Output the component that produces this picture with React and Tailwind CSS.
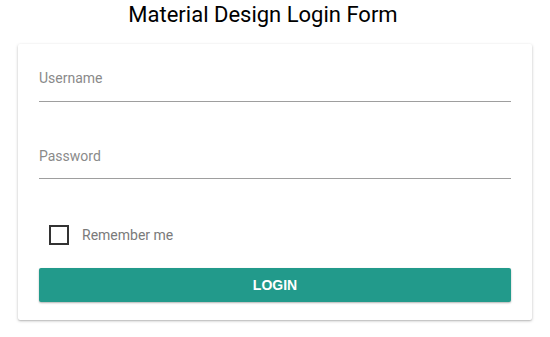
import React, { useState } from 'react';

const App = () => {
  const [remember, setRemember] = useState(false);

  return (
    <div className="min-h-screen bg-white font-['Roboto',sans-serif]">
      <h1 className="pt-[1px] pr-[24px] text-center text-[22px] leading-[28px] text-black">Material Design Login Form</h1>

      <div className="mx-[18px] mt-[15px] rounded-[2px] bg-white px-[21px] pt-[26px] pb-[18px] shadow-[0_1px_3px_rgba(0,0,0,0.25),0_1px_1px_rgba(0,0,0,0.08)]">
        {/* Username */}
        <div className="border-b border-[#9e9e9e] pb-[15px]">
          <label className="block text-[14px] leading-[16px] text-[#8a8a8a]">Username</label>
        </div>

        {/* Password */}
        <div className="mt-[46px] border-b border-[#9e9e9e] pb-[14px]">
          <label className="block text-[14px] leading-[16px] text-[#8a8a8a]">Password</label>
        </div>

        <label className="mt-[46px] flex items-center cursor-pointer" onClick={() => setRemember(!remember)}>
          <span className="ml-[10px] h-[20px] w-[20px] border-2 border-[#333]" />
          <span className="ml-[13px] text-[14px] leading-[16px] text-[#7a7a7a]">Remember me</span>
        </label>

        <button
          type="button"
          className="mt-[23px] h-[34px] w-full rounded-[2px] bg-[#229a8b] font-['Liberation_Sans',sans-serif] text-[14px] font-bold text-white shadow-[0_1px_2px_rgba(0,0,0,0.3)]"
        >
          LOGIN
        </button>
      </div>
    </div>
  );
};

export default App;
